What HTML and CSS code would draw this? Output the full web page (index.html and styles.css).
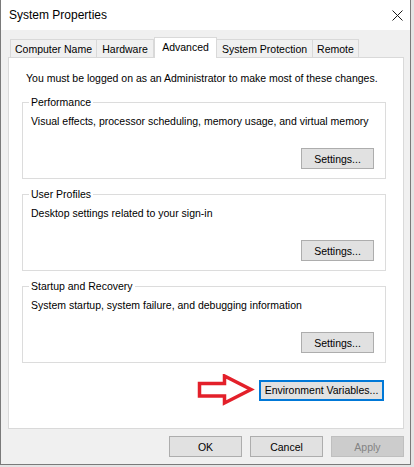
FILE: index.html
```html
<!DOCTYPE html>
<html lang="en">
<head>
<meta charset="utf-8">
<title>System Properties</title>
<link rel="stylesheet" href="styles.css">
</head>
<body>
<div class="window">
  <div class="titlebar">
    <span class="title">System Properties</span>
    <svg class="close" width="11" height="11" viewBox="0 0 11 11"><path d="M0.5 0.5 L10.5 10.5 M10.5 0.5 L0.5 10.5"/></svg>
  </div>
  <div class="body">
    <div class="tabs">
      <div class="tab tab-cn">Computer Name</div>
      <div class="tab tab-hw">Hardware</div>
      <div class="tab tab-adv is-active">Advanced</div>
      <div class="tab tab-sp">System Protection</div>
      <div class="tab tab-rm">Remote</div>
    </div>
    <div class="panel">
      <p class="note">You must be logged on as an Administrator to make most of these changes.</p>
      <fieldset class="group">
        <legend>Performance</legend>
        <p class="desc">Visual effects, processor scheduling, memory usage, and virtual memory</p>
        <div class="actions"><button class="btn">Settings...</button></div>
      </fieldset>
      <fieldset class="group">
        <legend>User Profiles</legend>
        <p class="desc">Desktop settings related to your sign-in</p>
        <div class="actions"><button class="btn">Settings...</button></div>
      </fieldset>
      <fieldset class="group">
        <legend>Startup and Recovery</legend>
        <p class="desc">System startup, system failure, and debugging information</p>
        <div class="actions"><button class="btn">Settings...</button></div>
      </fieldset>
      <div class="env-row">
        <svg class="arrow" width="58" height="32" viewBox="0 0 58 32"><polygon points="2.5,9.5 27.5,9.5 27.5,2 54,15.5 27.5,29 27.5,22 2.5,22"/></svg>
        <button class="btn btn-default">Environment Variables...</button>
      </div>
    </div>
    <div class="footer">
      <button class="btn">OK</button>
      <button class="btn">Cancel</button>
      <button class="btn btn-disabled">Apply</button>
    </div>
  </div>
</div>
</body>
</html>
```
FILE: styles.css
```css
html {
  background: #e4e4e4;
}
body {
  margin: 0;
  font-family: "Liberation Sans", Arial, sans-serif;
  font-size: 10.5px;
  color: #000;
}
.window {
  width: 411px;
  height: 465px;
  box-sizing: border-box;
  border: 1px solid #7a7a7a;
  border-top: none;
  background: #f0f0f0;
  display: flex;
  flex-direction: column;
}
.titlebar {
  height: 30px;
  flex: none;
  background: #fff;
  display: flex;
  align-items: center;
  justify-content: space-between;
  padding: 0 7px 0 8px;
}
.title {
  font-size: 12px;
}
.close {
  stroke: #1a1a1a;
  stroke-width: 1;
  fill: none;
}
.body {
  padding: 7px 6px 0 7px;
}
.tabs {
  display: flex;
  align-items: flex-end;
  margin-left: 2px;
  margin-bottom: -1px;
  position: relative;
  z-index: 1;
}
.tab {
  box-sizing: border-box;
  height: 18px;
  margin-bottom: 1px;
  border: 1px solid #d9d9d9;
  border-bottom: none;
  background: #f0f0f0;
  display: flex;
  align-items: center;
  justify-content: center;
  white-space: nowrap;
  padding-top: 1px;
}
.tab + .tab {
  border-left: none;
}
.tab-cn { width: 87px; }
.tab-hw { width: 57px; }
.tab-adv { width: 63px; }
.tab-sp { width: 96px; }
.tab-rm { width: 46px; }
.tab.is-active {
  height: 21px;
  margin-bottom: 0;
  background: #fff;
  border-left: 1px solid #d9d9d9;
  padding-top: 0;
  padding-bottom: 2px;
}
.tab.is-active + .tab {
  border-left: none;
}
.panel {
  box-sizing: border-box;
  height: 372px;
  background: #fff;
  border: 1px solid #d9d9d9;
  padding: 13px 17px 0 13px;
}
.note {
  margin: 0 0 0 4px;
  line-height: 15px;
  white-space: nowrap;
}
.group {
  margin: 9px 0 0 0;
  padding: 0 11px 9px 8px;
  border: 1px solid #dcdcdc;
  min-width: 0;
}
.group + .group {
  margin-top: 8px;
}
.group legend {
  padding: 0 2px;
  margin-left: -2px;
  line-height: 15px;
}
.desc {
  margin: 4px 0 0 0;
  line-height: 15px;
  white-space: nowrap;
}
.actions {
  display: flex;
  justify-content: flex-end;
  margin-top: 19px;
}
.btn {
  box-sizing: border-box;
  width: 73px;
  height: 21px;
  padding: 0;
  font: inherit;
  color: #000;
  background: #e1e1e1;
  border: 1px solid #adadad;
  border-radius: 0;
}
.env-row {
  display: flex;
  justify-content: flex-end;
  align-items: center;
  gap: 4px;
  margin-top: 11px;
  padding-right: 2px;
}
.arrow polygon {
  fill: #fff;
  stroke: #e3202a;
  stroke-width: 3.5;
  stroke-linejoin: miter;
}
.btn-default {
  width: 125px;
  border: 2px solid #0078d7;
}
.footer {
  display: flex;
  justify-content: flex-end;
  gap: 8px;
  margin-top: 7px;
}
.btn-disabled {
  background: #cccccc;
  border-color: #bfbfbf;
  color: #838383;
}
```
